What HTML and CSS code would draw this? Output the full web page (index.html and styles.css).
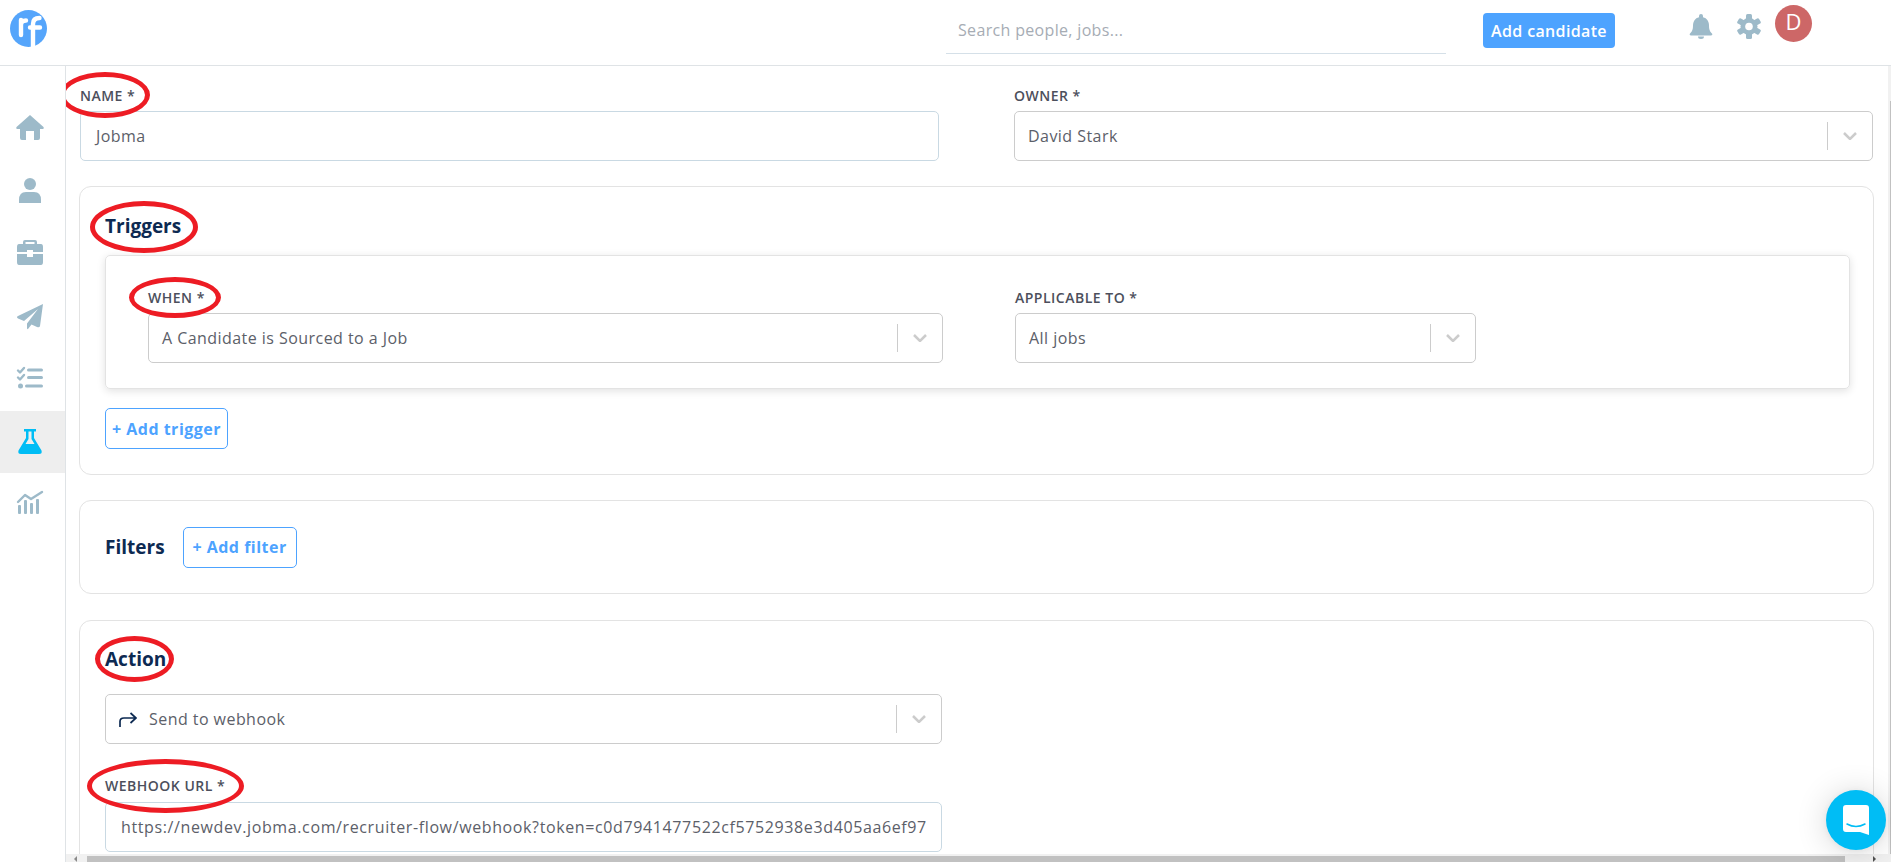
FILE: index.html
```html
<!DOCTYPE html>
<html lang="en">
<head>
<meta charset="utf-8">
<title>Recruiter Flow</title>
<link rel="stylesheet" href="styles.css">
</head>
<body>
<header class="topbar">
  <div class="brand">
    <svg class="logo" viewBox="0 0 37 37">
      <circle cx="18.500" cy="18.500" r="18.500" fill="#55a5fb"/>
      <path d="M11 10V25M11 15Q11 10.500 16 10.500M23 37V14Q23 8 29.500 8M20 17.500H30" fill="none" stroke="#fff" stroke-width="4.400" stroke-linecap="round"/>
    </svg>
  </div>
  <div class="search">Search people, jobs...</div>
  <button class="add-candidate">Add candidate</button>
  <svg class="top-icon bell" viewBox="0 0 24 25"><path d="M12 0a2 2 0 0 1 2 2v1.200c4 .9 6 4.300 6 8.300 0 5 1.500 6.500 3 8 .8.900.2 2-1 2H2c-1.200 0-1.800-1.100-1-2 1.500-1.500 3-3 3-8 0-4 2-7.400 6-8.300V2a2 2 0 0 1 2-2zM9 22.500h6a3 2.500 0 0 1-6 0z"/></svg>
  <svg class="top-icon gear" viewBox="0 0 24 25">
    <rect x="9" y="0" width="6" height="25" rx="1.500"/>
    <rect x="9" y="0" width="6" height="25" rx="1.500" transform="rotate(60 12 12.500)"/>
    <rect x="9" y="0" width="6" height="25" rx="1.500" transform="rotate(120 12 12.500)"/>
    <circle cx="12" cy="12.500" r="8.500"/>
    <circle class="gear-hole" cx="12" cy="12.500" r="3.800"/>
  </svg>
  <div class="avatar">D</div>
</header>

<div class="shell">
  <nav class="sidebar">
    <a class="nav-item"><svg viewBox="0 2 28 25"><path d="M14 0 27.500 12Q28.500 14 26 14H24V23Q24 25 22 25H18V16H10V25H6Q4 25 4 23V14H2Q-.5 14 .5 12Z"/></svg></a>
    <a class="nav-item"><svg viewBox="0 1 28 25"><circle cx="14" cy="6" r="6"/><path d="M3 25V22Q3 14 10 14H18Q25 14 25 22V25Q25 25 24 25H4Q3 25 3 25Z"/></svg></a>
    <a class="nav-item"><svg viewBox="0 2 28 25"><path d="M9 0H19Q21 0 21 2V4H25Q27 4 27 7V12H17V10H11V12H1V7Q1 4 3 4H7V2Q7 0 9 0ZM9.500 2V4H18.500V2Z" fill-rule="evenodd"/><path d="M1 14H11V17H17V14H27V22Q27 25 25 25H3Q1 25 1 22Z"/></svg></a>
    <a class="nav-item"><svg viewBox="0 0 28 25"><path d="M27 0 24 22Q23.500 24 21 23L15.500 20.500 12 25Q11 25.500 11 24V19.500L22 5 8 17 2 14.500Q0 13 2 12Z"/></svg></a>
    <a class="nav-item"><svg viewBox="0 1 28 25"><path class="thin" d="M2 4.500 4 6.500 8 2M2 11.500 4 13.500 8 9"/><circle cx="4.500" cy="20" r="2.500"/><rect x="11" y="2.500" width="16" height="3" rx="1.500"/><rect x="11" y="10" width="16" height="3" rx="1.500"/><rect x="9" y="18.500" width="18" height="3" rx="1.500"/></svg></a>
    <a class="nav-item active"><svg viewBox="0 0 28 25"><path d="M8 0H20V2.500H18V9L25.500 21.500Q26.500 25 23 25H5Q1.500 25 2.500 21.500L10 9V2.500H8ZM12.500 2.500V10L9.500 15H18.500L15.500 10V2.500Z" fill-rule="evenodd"/></svg></a>
    <a class="nav-item"><svg viewBox="0 2 28 25"><path class="thin" d="M2 12 9 5 15 9 26 2"/><rect x="2" y="15" width="3" height="9" rx="1"/><rect x="8" y="10" width="3" height="14" rx="1"/><rect x="14" y="13" width="3" height="11" rx="1"/><rect x="20" y="9" width="3" height="15" rx="1"/></svg></a>
  </nav>

  <main class="main">
    <div class="viewport">
      <div class="content">
        <section class="top-fields">
          <div>
            <label class="label"><span class="mark">NAME *<i class="ring ring-name"></i></span></label>
            <div class="control input">Jobma</div>
          </div>
          <div>
            <label class="label">OWNER *</label>
            <div class="control select"><span class="value">David Stark</span><span class="sep"></span><svg class="chev" viewBox="0 0 14 8"><path d="M1 1 7 7 13 1"/></svg></div>
          </div>
        </section>

        <section class="card triggers">
          <h2 class="title"><span class="mark">Triggers<i class="ring ring-triggers"></i></span></h2>
          <div class="inner">
            <div>
              <label class="label"><span class="mark">WHEN *<i class="ring ring-when"></i></span></label>
              <div class="control select"><span class="value">A Candidate is Sourced to a Job</span><span class="sep"></span><svg class="chev" viewBox="0 0 14 8"><path d="M1 1 7 7 13 1"/></svg></div>
            </div>
            <div>
              <label class="label">APPLICABLE TO *</label>
              <div class="control select"><span class="value">All jobs</span><span class="sep"></span><svg class="chev" viewBox="0 0 14 8"><path d="M1 1 7 7 13 1"/></svg></div>
            </div>
          </div>
          <button class="outline add-trigger">+ Add trigger</button>
        </section>

        <section class="card filters">
          <h2 class="title">Filters</h2>
          <button class="outline">+ Add filter</button>
        </section>

        <section class="card action">
          <h2 class="title"><span class="mark">Action<i class="ring ring-action"></i></span></h2>
          <div class="action-fields">
            <div class="control select">
              <svg class="forward" viewBox="0 0 18 15"><path d="M1 15V9.500Q1 6 5 6H17M11.500 1 17 6 11.500 11"/></svg>
              <span class="value">Send to webhook</span><span class="sep"></span><svg class="chev" viewBox="0 0 14 8"><path d="M1 1 7 7 13 1"/></svg>
            </div>
            <label class="label webhook-label"><span class="mark">WEBHOOK URL *<i class="ring ring-webhook"></i></span></label>
            <div class="control input"><span class="clip">https://newdev.jobma.com/recruiter-flow/webhook?token=c0d7941477522cf5752938e3d405aa6ef970</span></div>
          </div>
        </section>
      </div>
      <div class="vscroll"><div class="vthumb"></div></div>
    </div>
    <div class="hscroll">
      <span class="arrow arrow-left"></span>
      <div class="hthumb"></div>
      <span class="arrow arrow-right"></span>
    </div>
  </main>
</div>

<button class="chat" aria-label="Chat">
  <svg viewBox="0 0 26 30"><path d="M3 0H23Q26 0 26 3V30L17 27H3Q0 27 0 24V3Q0 0 3 0Z" fill="#fff"/><path d="M4 19Q13 24 22 19" fill="none" stroke="#00bdf5" stroke-width="1.500" stroke-linecap="round"/></svg>
</button>
</body>
</html>
```

FILE: styles.css
```css
* { box-sizing: border-box; }
html, body { margin: 0; height: 100%; }
body {
  width: 1891px;
  height: 862px;
  overflow: hidden;
  background: #fff;
  color: #555a64;
  font-family: "Open Sans", Lato, sans-serif;
  font-size: 16px;
  display: flex;
  flex-direction: column;
  position: relative;
}
button { font-family: inherit; cursor: pointer; }

/* top bar */
.topbar {
  height: 66px;
  flex: none;
  display: flex;
  align-items: flex-start;
  border-bottom: 1px solid #dfe3e6;
}
.brand { width: 946px; padding: 10px 0 0 10px; flex: none; }
.logo { display: block; width: 37px; height: 37px; }
.search {
  width: 500px;
  height: 54px;
  padding: 20px 0 0 12px;
  line-height: 20px;
  font-size: 16px;
  letter-spacing: .33px;
  color: #a6acb4;
  border-bottom: 1px solid #d5e0e8;
}
.add-candidate {
  width: 132px;
  height: 35px;
  margin: 13px 0 0 37px;
  padding: 0;
  border: 0;
  border-radius: 4px;
  background: #4da3ff;
  color: #fff;
  font-size: 16px;
  letter-spacing: .35px;
  font-weight: 600;
}
.top-icon { width: 24px; height: 25px; margin-top: 14px; fill: #9dbac9; flex: none; }
.gear-hole { fill: #fff; }
.bell { margin-left: 74px; }
.gear { margin-left: 24px; }
.avatar {
  width: 37px;
  height: 37px;
  margin: 5px 0 0 14px;
  border-radius: 50%;
  background: #cd6767;
  color: #fff;
  font-size: 22px;
  line-height: 32px;
  text-align: center;
}

/* shell */
.shell { flex: 1; min-height: 0; display: flex; }
.sidebar {
  width: 66px;
  flex: none;
  padding-top: 32px;
  border-right: 1px solid #dfe3e6;
}
.nav-item {
  display: flex;
  height: 62.500px;
  align-items: center;
  justify-content: center;
  padding-right: 5px;
}
.nav-item svg { width: 28px; height: 25px; fill: #9dbac9; overflow: visible; }
.nav-item .thin { fill: none; stroke: #9dbac9; stroke-width: 2.400; stroke-linecap: round; stroke-linejoin: round; }
.nav-item.active { background: #eeeeee; }
.nav-item.active svg { fill: #00bdf5; }

.main { flex: 1; min-width: 0; display: flex; flex-direction: column; }
.viewport { flex: 1; min-height: 0; display: flex; }
.content { flex: 1; min-width: 0; overflow: hidden; padding: 21px 14px 0 13px; }

/* scrollbars */
.vscroll { width: 3px; flex: none; background: #f1f1f1; padding-top: 35px; }
.vthumb { height: 100%; width: 1px; margin-left: 2px; background: #c1c1c1; }
.hscroll {
  height: 8px;
  flex: none;
  background: #f1f1f1;
  display: flex;
  align-items: flex-end;
  padding-left: 8px;
}
.arrow { width: 0; height: 0; border-style: solid; flex: none; }
.arrow-left { border-width: 3px 3px 3px 0; border-color: transparent #8a8a8a transparent transparent; }
.hthumb { width: 1758px; height: 6px; margin: 0 28px 0 10px; background: #c1c1c1; flex: none; }
.arrow-right { border-width: 3px 0 3px 3px; border-color: transparent transparent transparent #505050; }

/* form */
.top-fields {
  display: grid;
  grid-template-columns: 859px 859px;
  column-gap: 75px;
  padding-left: 1px;
}
.label {
  display: block;
  height: 18px;
  margin-bottom: 6px;
  font-size: 14px;
  letter-spacing: .5px;
  line-height: 18px;
  font-weight: 600;
  color: #4c4f5c;
  white-space: nowrap;
}
.mark { position: relative; display: inline-block; }
.ring {
  position: absolute;
  border: 5px solid #ed1c24;
  border-radius: 50%;
  pointer-events: none;
}
.ring-name { left: -20px; top: -15px; width: 90px; height: 46px; }
.ring-triggers { left: -15px; top: -13px; width: 108px; height: 52px; }
.ring-when { left: -19px; top: -12px; width: 92px; height: 41px; }
.ring-action { left: -10px; top: -11px; width: 79px; height: 46px; }
.ring-webhook { left: -18px; top: -18px; width: 157px; height: 54px; }

.control {
  height: 50px;
  border-radius: 5px;
  display: flex;
  align-items: center;
  font-size: 16px;
  letter-spacing: .45px;
  color: #5c6069;
  white-space: nowrap;
  background: #fff;
}
.input { border: 1px solid #c9d9e3; padding: 0 15px; }
.select { border: 1px solid #cccccc; padding-left: 13px; }
.value { flex: 1; min-width: 0; }
.clip { display: block; overflow: hidden; min-width: 0; flex: 1; letter-spacing: .62px; }
.sep { width: 1px; height: 28px; background: #cccccc; flex: none; }
.chev {
  width: 14px;
  height: 8px;
  margin: 0 15px;
  flex: none;
  fill: none;
  stroke: #cccccc;
  stroke-width: 2.500;
}

.card {
  margin-top: 25px;
  border: 1px solid #e3e3e3;
  border-radius: 12px;
  padding: 27px 23px 25px 25px;
}
.title {
  margin: 0;
  font-size: 19px;
  line-height: 24px;
  font-weight: 700;
  color: #0d2a52;
}
.inner {
  margin-top: 17px;
  display: grid;
  grid-template-columns: 795px 461px;
  column-gap: 72px;
  height: 134px;
  padding: 33px 0 0 42px;
  border: 1px solid #e3e3e3;
  border-radius: 5px;
  box-shadow: 0 2px 8px rgba(0, 0, 0, .12);
}
.outline {
  height: 41px;
  padding: 0;
  border: 1px solid #4da3ff;
  border-radius: 5px;
  background: #fff;
  color: #4da3ff;
  font-size: 16px;
  letter-spacing: .5px;
  font-weight: 700;
}
.add-trigger { display: block; width: 123px; margin-top: 19px; }
.filters { display: flex; align-items: center; gap: 18px; height: 94px; padding-top: 0; padding-bottom: 0; }
.filters .outline { width: 114px; }
.action { margin-top: 26px; padding-top: 26px; height: 300px; }
.action-fields { width: 837px; margin-top: 23px; }
.forward {
  width: 18px;
  height: 15px;
  margin-right: 12px;
  fill: none;
  stroke: #0d2a52;
  stroke-width: 1.700;
  flex: none;
}
.webhook-label { margin-top: 33px; margin-bottom: 7px; }

/* chat launcher */
.chat {
  position: absolute;
  left: 1826px;
  top: 790px;
  width: 60px;
  height: 60px;
  padding: 0;
  border: 0;
  border-radius: 50%;
  background: #00bdf5;
  display: flex;
  align-items: center;
  justify-content: center;
  box-shadow: 0 1px 6px rgba(0, 0, 0, .06), 0 2px 32px rgba(0, 0, 0, .16);
}
.chat svg { width: 26px; height: 30px; }
```
